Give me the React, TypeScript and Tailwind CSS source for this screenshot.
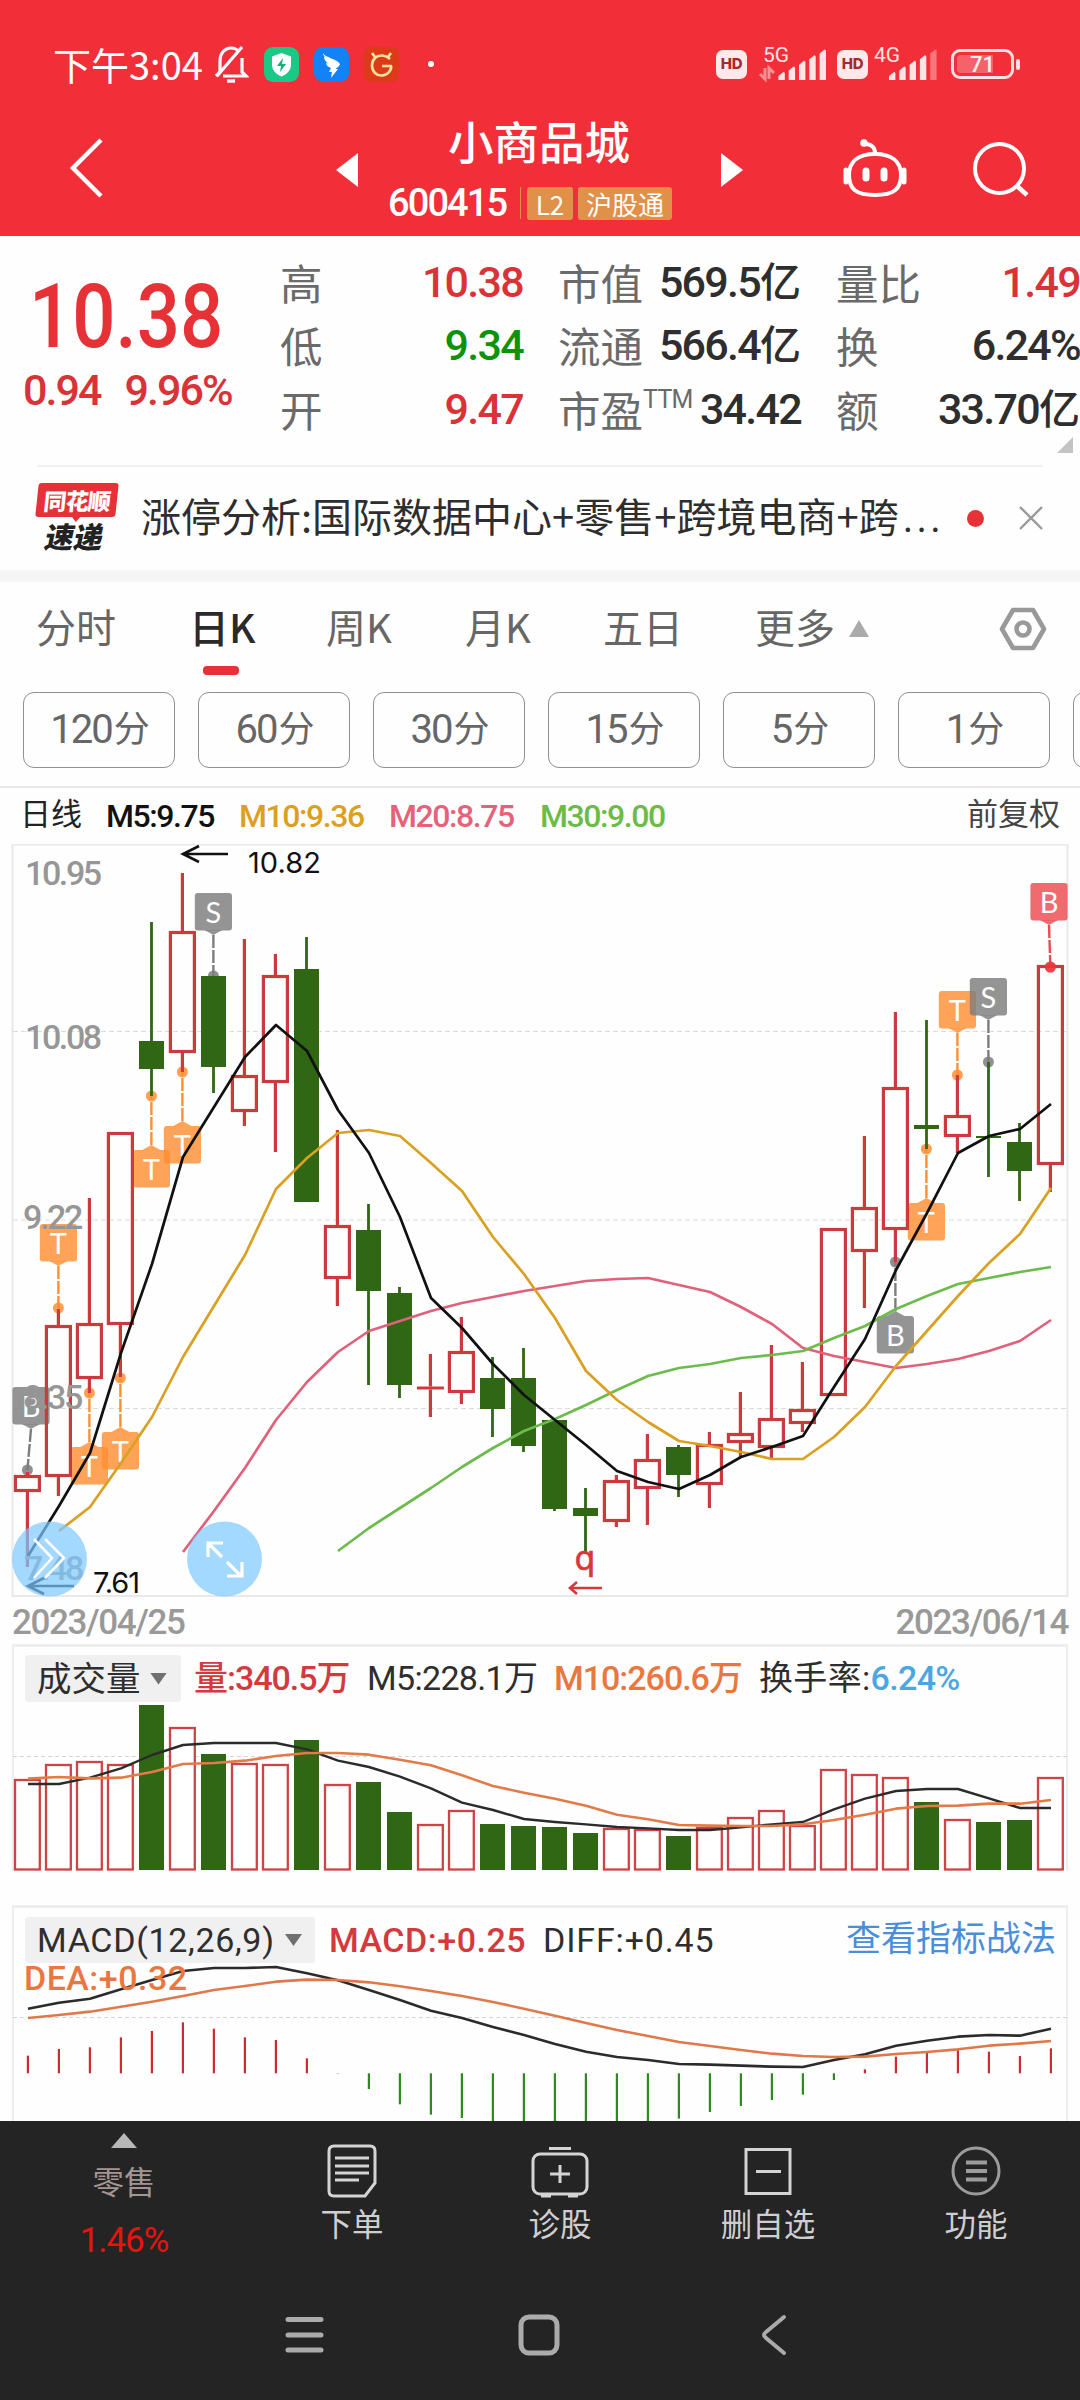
import type { ReactNode } from "react";

const RED = "#cb3a3c";
const GREEN = "#2f6714";
const ORANGE = "#ff8f33";
const GREY = "#7d7d7d";

const cx = (i: number) => 27.4 + i * 31;

// [up, high, bodyTop, bodyBottom, low]
const CANDLES: [number, number, number, number, number][] = [
    [1, 1472, 1475, 1492, 1567], [1, 1309, 1325, 1477, 1496], [1, 1198, 1323, 1379, 1393], [1, 1132, 1132, 1325, 1377],
    [0, 922, 1041, 1069, 1096], [1, 873, 931, 1053, 1072], [0, 976, 976, 1067, 1093], [1, 939, 1075, 1112, 1126],
    [1, 954, 975, 1083, 1152], [0, 937, 969, 1202, 1202], [1, 1130, 1225, 1279, 1306], [0, 1204, 1230, 1291, 1385],
    [0, 1287, 1293, 1385, 1398], [1, 1354, 1386.5, 1389.5, 1417], [1, 1317, 1351, 1393, 1404], [0, 1357, 1378, 1409, 1437],
    [0, 1348, 1378, 1446, 1452], [0, 1420, 1420, 1509, 1511], [0, 1488, 1508, 1516, 1554], [1, 1475, 1480, 1522, 1527],
    [1, 1434, 1459, 1489, 1525], [0, 1445, 1447, 1475, 1497], [1, 1432, 1444, 1485, 1508], [1, 1392, 1433, 1443, 1457],
    [1, 1345, 1418, 1448, 1458], [1, 1362, 1409, 1424, 1432], [1, 1228, 1228, 1396, 1396], [1, 1136, 1207, 1252, 1308],
    [1, 1012, 1087, 1230, 1262], [0, 1020, 1125, 1129, 1149], [1, 1075, 1115, 1137, 1153], [0, 1062, 1136, 1138, 1177],
    [0, 1123, 1142, 1171, 1201], [1, 965, 965, 1165, 1192],
];

const M5 = [1556, 1506, 1453, 1353, 1264, 1157, 1107, 1057, 1025, 1051, 1110, 1153, 1217, 1298, 1328, 1364, 1395, 1420, 1445, 1471, 1482, 1489, 1475, 1457, 1447, 1436, 1387, 1339, 1270, 1213, 1153, 1136, 1129, 1104];
const M10 = [1531, 1507, 1463, 1417, 1357, 1306, 1255, 1189, 1158, 1133, 1130, 1136, 1163, 1191, 1237, 1274, 1318, 1371, 1400, 1422, 1441, 1446, 1452, 1459, 1459, 1437, 1407, 1366, 1331, 1296, 1263, 1234, 1188];
const M20 = [1552, 1511, 1468, 1420, 1382, 1352, 1331, 1321, 1311, 1303, 1297, 1291, 1286, 1281, 1279, 1278, 1285, 1292, 1307, 1324, 1348, 1356, 1362, 1368, 1364, 1359, 1351, 1341, 1320];
const M30 = [1551, 1528, 1508, 1488, 1467, 1448, 1431, 1419, 1405, 1390, 1376, 1368, 1364, 1358, 1355, 1351, 1338, 1326, 1309, 1296, 1284, 1278, 1272, 1267];

const VOL = [1779, 1764, 1761, 1764, 1705, 1727, 1754, 1763, 1764, 1740, 1784, 1782, 1812, 1824, 1810, 1824, 1826, 1827, 1833, 1828, 1829, 1836, 1827, 1817, 1810, 1825, 1769, 1774, 1777, 1802, 1819, 1822, 1820, 1777];
const VOL_M5 = [462, 462, 443, 415, 375, 345, 339, 339, 339, 358, 392, 411, 440, 475, 518, 540, 567, 576, 583, 591, 595, 600, 600, 592, 583, 576, 538, 506, 483, 477, 477, 505, 534, 534].map((v) => 1630 + v / 3);
const VOL_M10 = [446, 441, 445, 443, 426, 402, 399, 392, 378, 369, 369, 374, 389, 406, 436, 468, 488, 506, 527, 554, 568, 585, 587, 588, 588, 583, 570, 554, 536, 528, 527, 521, 521, 510].map((v) => 1630 + v / 3);

const DIFF = [356, 338, 326, 298, 270, 243, 234, 234, 231, 250, 271, 300, 330, 362, 384, 411, 435, 462, 485, 501, 510, 522, 524, 527, 530, 531, 510, 493, 467, 452, 440, 435, 437, 416].map((v) => 1890 + v / 3);
const DEA = [384, 375, 365, 350, 335, 318, 300, 288, 275, 269, 270, 277, 289, 303, 318, 336, 356, 377, 399, 420, 438, 456, 468, 480, 491, 498, 501, 500, 492, 486, 478, 467, 461, 453].map((v) => 1890 + v / 3);
const HIST = [497, 477, 472, 442, 423, 397, 416, 442, 450, 505, 552, 597, 643, 674, 684, 710, 720, 720, 720, 710, 700, 686, 666, 648, 630, 614, 570, 538, 500, 488, 480, 485, 498, 475].map((v) => 1890 + v / 3);

// signal flags: box centre, box top, candle x, dot y, pointing down or up
const FLAGS: { t: string; x: number; top: number; dx: number; dot: number; down: boolean; c: string }[] = [
    { t: "B", x: 31, top: 1387, dx: 27.4, dot: 1470, down: true, c: GREY },
    { t: "T", x: 58.4, top: 1224, dx: 58.4, dot: 1308, down: true, c: ORANGE },
    { t: "T", x: 89.4, top: 1447, dx: 89.4, dot: 1393, down: false, c: ORANGE },
    { t: "T", x: 120.4, top: 1432, dx: 120.4, dot: 1378, down: false, c: ORANGE },
    { t: "T", x: 151.4, top: 1150, dx: 151.4, dot: 1096, down: false, c: ORANGE },
    { t: "T", x: 182.4, top: 1126, dx: 182.4, dot: 1072, down: false, c: ORANGE },
    { t: "S", x: 213.4, top: 893, dx: 213.4, dot: 976, down: true, c: GREY },
    { t: "B", x: 895.4, top: 1316, dx: 895.4, dot: 1262, down: false, c: GREY },
    { t: "T", x: 926.4, top: 1203, dx: 926.4, dot: 1149, down: false, c: ORANGE },
    { t: "T", x: 957.4, top: 991, dx: 957.4, dot: 1075, down: true, c: ORANGE },
    { t: "S", x: 988.4, top: 978, dx: 988.4, dot: 1062, down: true, c: GREY },
    { t: "B", x: 1049, top: 883, dx: 1050.4, dot: 967, down: true, c: "#ec4a50" },
];

function Line({ data, from = 0, color, w = 2.7 }: { data: number[]; from?: number; color: string; w?: number }) {
    return (
        <polyline
            points={data.map((y, i) => `${cx(i + from) + 0.6},${y}`).join(" ")}
            fill="none"
            stroke={color}
            strokeWidth={w}
            strokeLinejoin="round"
        />
    );
}

function Flag({ f }: { f: (typeof FLAGS)[number] }) {
    const edge = f.down ? f.top + 37 : f.top;
    const tip = f.down ? edge + 5 : edge - 5;
    return (
        <g>
            <line x1={f.x} y1={tip} x2={f.dx} y2={f.dot} stroke={f.c} strokeWidth="2.4" strokeDasharray="13 2" />
            <circle cx={f.dx} cy={f.dot} r="5.5" fill={f.c} fillOpacity="0.85" />
            <g fill={f.c} fillOpacity="0.82">
                <rect x={f.x - 18.6} y={f.top} width="37.2" height="37.4" rx="3" />
                <polygon points={`${f.x - 9},${edge} ${f.x + 9},${edge} ${f.x},${tip}`} />
            </g>
            <text x={f.x} y={f.top + 29.5} textAnchor="middle" fontSize="29" fill="#fff" className="font-[Lato]">{f.t}</text>
        </g>
    );
}

function StatusBar() {
    return (
        <div className="flex h-[112px] items-center pl-[53px] pr-[60px] pt-4">
            <span className="-mt-[2px] w-[160px] whitespace-nowrap text-[38px]">下午3:04</span>
            <svg width="36" height="40" viewBox="0 0 36 40" fill="none" stroke="#fff" strokeWidth="3.2">
                <path d="M7 28V17C7 9 12 4 18 4c3 0 6 1 8 4M29 14v14l4 4H10M3 32l4-4" />
                <path d="M29 3 4 32" />
                <path d="M14 37h8" strokeWidth="3.4" />
            </svg>
            <svg width="35" height="35" viewBox="0 0 35 35" className="ml-[15px]">
                <rect width="35" height="35" rx="9" fill="#1cc886" />
                <path d="M17.500 6 27 9.500v8c0 6-4 9.500-9.500 12C12 27 8 23.500 8 17.500v-8z" fill="#fff" />
                <path d="M19 11l-6 8h4l-1 6 6-8h-4z" fill="#1cae78" />
            </svg>
            <svg width="35" height="35" viewBox="0 0 35 35" className="ml-[15px]">
                <rect width="35" height="35" rx="9" fill="#1182f8" />
                <path d="M9 6c2 5 13 5 17 11-1 3-4 4-4 5h2l-7 9 1-6h-3l2-4c-3-1-5-3-5-5l2 .5c-3-2-4-5-4-7l3 1C10 10 9 8 9 6z" fill="#fff" />
            </svg>
            <svg width="35" height="35" viewBox="0 0 35 35" className="ml-[15px]">
                <rect width="35" height="35" rx="8" fill="#dc3a18" />
                <path d="M8 6l3 4M27 6l-3 4M26 12C22 8 15 7 11 11s-4 11 0 15 11 3 14-1 2-6 2-6h-9" fill="none" stroke="#fbe5a0" strokeWidth="2.6" />
            </svg>
            <span className="ml-[29px] h-[6px] w-[6px] rounded-full bg-white" />
            <div className="ml-auto flex h-9 items-center text-white/90">
                <Hd />
                <Signal label="5G" arrows />
                <Hd />
                <Signal label="4G" />
                <div className="ml-[13px] flex h-[30px] w-[63px] items-center rounded-[9px] border-[3px] border-white/85 p-[3px]">
                    <div className="flex h-full w-full items-center justify-center rounded-[4px] bg-linear-to-r from-white/25 from-70% to-transparent to-70% font-[Roboto] text-[22px] font-medium">71</div>
                </div>
                <span className="ml-[2px] h-[11px] w-[4px] rounded bg-white/85" />
            </div>
        </div>
    );
}

function Hd() {
    return (
        <span className="flex h-[29px] w-[31px] items-center justify-center rounded-[7px] bg-white/90 font-[Inter] text-[15px] font-extrabold tracking-[-0.02em] text-[#a52a30]">HD</span>
    );
}

function Signal({ label, arrows }: { label: string; arrows?: boolean }) {
    return (
        <svg width={arrows ? 78 : 70} height="36" viewBox={arrows ? "0 0 78 36" : "0 0 70 36"} className={arrows ? "ml-3 overflow-visible" : "overflow-visible"}>
            <g transform={arrows ? "translate(0 0)" : "translate(-9 0)"} fill="#ffe4e4">
                <text x={arrows ? 4 : 15} y="16" fontSize="21" className="font-[Roboto]">{label}</text>
                {arrows && <path d="M6 22v11l-5-5M10 33V22l5 5" stroke="#fa8f94" strokeWidth="3" fill="none" />}
                {[0, 1, 2, 3, 4].map((i) => (
                    <path
                        key={i}
                        transform={`translate(${(arrows ? 19.4 : 30) + i * 10.3} ${26 - i * 5.6})`}
                        d={`M0 4L5 0Q6.400 0 6.400 1.500V${8 + i * 5.6}H0z`}
                        opacity={!arrows && i === 4 ? 0.4 : 1}
                    />
                ))}
            </g>
        </svg>
    );
}

function Header() {
    return (
        <div className="flex h-[124px] text-white">
            <svg width="380" height="124" viewBox="0 112 380 124" fill="none" className="shrink-0">
                <path d="M101 140 73 168l28 28" stroke="#fff" strokeWidth="4.500" />
                <path d="M358 153v34l-22-17z" fill="#fff" />
            </svg>
            <div className="flex w-[320px] flex-col items-center">
                <div className="mr-[2px] h-[54px] pt-[1px] text-[45.500px] font-medium leading-[54px]">小商品城</div>
                <div className="mt-[18px] flex h-[38px] w-[304px] items-center">
                    <span className="w-[132px] font-[Roboto] text-[38px] font-medium tracking-[-0.05em]">600415</span>
                    <span className="mr-[6px] h-8 w-px bg-[#e09048]" />
                    <span className="mr-[5px] flex h-[33px] w-[46px] items-center justify-center rounded-[3px] bg-[#e09048] text-[26px]">L2</span>
                    <span className="flex h-[33px] w-[94px] items-center justify-center rounded-[3px] bg-[#e09048] text-[26px]">沪股通</span>
                </div>
            </div>
            <svg width="380" height="124" viewBox="700 112 380 124" fill="none" stroke="#fff" strokeWidth="4">
                <path d="M721 153v34l22-17z" fill="#fff" stroke="none" />
                <path d="M849 175c0-14 10-21 26-21s26 7 26 21-7 20-26 20-26-6-26-20z" />
                <path d="M846 170v12M904 170v12" strokeWidth="5" strokeLinecap="round" />
                <path d="M875 153c0-5-3-9-10-9" />
                <path d="M866 171v7M884 171v7" strokeWidth="7" strokeLinecap="round" />
                <circle cx="864" cy="143" r="3.800" fill="#fff" stroke="none" />
                <circle cx="999.500" cy="168.500" r="24.500" />
                <path d="M1017 186l10 9" strokeWidth="4.500" />
            </svg>
        </div>
    );
}

const NUM = "font-[Roboto,'Noto_Sans_CJK_SC'] font-medium tracking-[-0.04em] text-[43px]";

function Pair({ label, sup, value, color = "text-[#2e2e2e]" }: { label: string; sup?: string; value: ReactNode; color?: string }) {
    return (
        <div className="flex h-[63.500px] items-center justify-between whitespace-nowrap">
            <span className="flex text-[42.500px] text-[#6a6a6a]">
                {label}
                {sup && <span className="mt-1 font-[Roboto] text-[25px] tracking-[-0.03em]">{sup}</span>}
            </span>
            <span className={`${NUM} ${color}`}>{value}</span>
        </div>
    );
}

function Yi() {
    return <span className="text-[41px] tracking-normal">亿</span>;
}

function Quote() {
    return (
        <div className="relative flex h-[229px] pt-[15px]">
            <div className="w-[280px] text-[#e63236]">
                <div className="ml-[29px] mt-[18px] h-[96px] w-[222px] origin-left scale-x-[0.855] font-[Roboto] text-[89px] font-medium leading-[96px]">10.38</div>
                <div className="-mt-[7px] flex gap-[24px] pl-[23px] font-[Roboto] text-[43px] font-medium tracking-[-0.045em] text-[#d93338]">
                    <span>0.94</span>
                    <span>9.96%</span>
                </div>
            </div>
            <div className="-mt-[1px] w-[243px]">
                <Pair label="高" value="10.38" color="text-[#d93338]" />
                <Pair label="低" value="9.34" color="text-[#0c930c]" />
                <Pair label="开" value="9.47" color="text-[#d93338]" />
            </div>
            <div className="-mt-[1px] ml-[35px] w-[243px]">
                <Pair label="市值" value={<>569.5<Yi /></>} />
                <Pair label="流通" value={<>566.4<Yi /></>} />
                <Pair label="市盈" sup="TTM" value="34.42" />
            </div>
            <div className="-mt-[1px] ml-[35px] w-[244px]">
                <Pair label="量比" value="1.49" color="text-[#d93338]" />
                <Pair label="换" value="6.24%" />
                <Pair label="额" value={<>33.70<Yi /></>} />
            </div>
            <span className="absolute bottom-3 right-[7px] h-4 w-4 bg-[#c4c4c4] [clip-path:polygon(100%_0,100%_100%,0_100%)]" />
        </div>
    );
}

function Banner() {
    return (
        <div className="h-[105px] px-[37px]">
            <div className="flex h-full items-center border-t-2 border-[#f0f0f0] pb-px">
                <div className="-mt-[5px] flex w-[105px] flex-col">
                    <div className="relative flex h-[34px] w-[80px] -skew-x-6 items-center justify-center rounded-[3px] bg-[#e63236] text-[23px] font-black tracking-[-0.04em] text-white">
                        同花顺
                        <span className="absolute -bottom-[5px] left-[36px] h-[6px] w-[10px] bg-[#e63236] [clip-path:polygon(0_0,100%_0,50%_100%)]" />
                    </div>
                    <div className="mt-[4px] h-[28px] w-[76px] -skew-x-12 text-center text-[29px] font-black leading-[28px] text-[#222]">速递</div>
                </div>
                <span className="-mt-[2px] w-[834px] whitespace-nowrap text-[40px] text-[#2e2e2e]">涨停分析:国际数据中心+零售+跨境电商+跨<span className="ml-[4px] font-[Roboto] tracking-[0.08em]">...</span></span>
                <span className="h-[17px] w-[17px] shrink-0 rounded-full bg-[#e63236]" />
                <svg width="24" height="24" viewBox="0 0 24 24" stroke="#999" strokeWidth="2.400" className="ml-[35px] shrink-0">
                    <path d="M1 1l22 22M23 1 1 23" />
                </svg>
            </div>
        </div>
    );
}

function Tabs() {
    return (
        <div className="flex h-[122px] items-start border-t-[12px] border-[#f5f5f5] pl-[36px] text-[40px] leading-[60px] text-[#666]">
            <span className="mt-[14px] w-[153px]">分时</span>
            <span className="mt-[14px] flex w-[137px] flex-col font-medium text-[#2a2a2a]">
                日K
                <i className="ml-[14px] mt-[10px] h-[9px] w-[36px] rounded-[4px] bg-[#e93036]" />
            </span>
            <span className="mt-[14px] w-[139px]">周K</span>
            <span className="mt-[14px] w-[138px]">月K</span>
            <span className="mt-[14px] w-[152px]">五日</span>
            <span className="mt-[14px] w-[94px]">更多</span>
            <span className="mt-[38px] h-[17px] w-[20px] bg-[#aaa] [clip-path:polygon(50%_0,100%_100%,0_100%)]" />
            <svg width="48" height="44" viewBox="0 0 48 44" fill="none" stroke="#999" strokeWidth="4.600" strokeLinejoin="round" className="ml-[130px] mt-[25px]">
                <path d="M14 3h20l11 19-11 19H14L3 22z" />
                <circle cx="24" cy="22" r="6.500" />
            </svg>
        </div>
    );
}

function Periods() {
    return (
        <div className="flex h-[96px] gap-[23px] overflow-hidden border-b-2 border-[#e8e8e8] pl-[23px]">
            {["120", "60", "30", "15", "5", "1", ""].map((p) => (
                <span key={p} className="flex h-[76px] w-[152px] shrink-0 items-center justify-center rounded-[11px] border border-[#909090] text-[#666]">
                    {p && (
                        <span className="font-[Roboto,'Noto_Sans_CJK_SC'] text-[40px] tracking-[-0.05em]">
                            {p}<span className="relative -top-[1px] ml-[2px] text-[36px]">分</span>
                        </span>
                    )}
                </span>
            ))}
        </div>
    );
}

function Legend() {
    return (
        <div className="flex h-[56px] items-center whitespace-nowrap pb-[1px] pl-[20px] pr-[20px] font-[Roboto,'Noto_Sans_CJK_SC'] text-[32px] font-medium tracking-[-0.045em]">
            <span className="w-[86px] text-[31px] font-normal tracking-normal text-[#222]">日线</span>
            <span className="w-[133px] text-[#111]">M5:9.75</span>
            <span className="w-[150px] text-[#dd9f1f]">M10:9.36</span>
            <span className="w-[151px] text-[#e6627a]">M20:8.75</span>
            <span className="text-[#6bbb48]">M30:9.00</span>
            <span className="ml-auto text-[31px] font-normal tracking-normal text-[#444]">前复权</span>
        </div>
    );
}

function KChart() {
    return (
        <svg width="1080" height="754" viewBox="0 844 1080 754" className="block">
            <rect x="12.500" y="844.500" width="1055" height="751.500" fill="none" stroke="#e9e9e9" strokeWidth="2" />
            {[1031.5, 1220, 1408.5].map((y) => (
                <line key={y} x1="13" x2="1067" y1={y} y2={y} stroke="#dcdcdc" strokeWidth="1.200" strokeDasharray="5 3" />
            ))}
            {FLAGS.map((f, i) => <Flag key={i} f={f} />)}
            {CANDLES.map(([up, hi, top, bot, lo], i) => {
                const x = cx(i);
                if (!up) {
                    return (
                        <g key={i} fill={GREEN}>
                            <rect x={x - 1.3} y={hi} width="2.8" height={lo - hi} />
                            <rect x={x - 12.4} y={top} width="25" height={bot - top} />
                        </g>
                    );
                }
                return (
                    <g key={i} fill={RED}>
                        <rect x={x - 1.6} y={hi} width="3.2" height={top - hi} />
                        <rect x={x - 1.6} y={bot} width="3.2" height={lo - bot} />
                        {bot - top > 4
                            ? <rect x={x - 12} y={top + 1.5} width="24" height={bot - top - 3} fill="none" stroke={RED} strokeWidth="3.2" />
                            : <rect x={x - 13.5} y={top} width="27" height={bot - top} />}
                    </g>
                );
            })}
            <Line data={M20} from={5} color="#e0617a" />
            <Line data={M30} from={10} color="#6cbb4c" />
            <Line data={M10} from={1} color="#d9a022" />
            <Line data={M5} color="#111" />
            <circle cx="1050.400" cy="967" r="5.500" fill="#f0353b" fillOpacity="0.7" />

            <g fill="#969696" fontSize="34" fontWeight="500" letterSpacing="-2.400" className="font-[Roboto]">
                <text x="25" y="885">10.95</text>
                <text x="25" y="1049">10.08</text>
                <text x="23" y="1229">9.22</text>
                <text x="23" y="1409">8.35</text>
                <text x="24" y="1580">7.48</text>
            </g>
            <g fill="none" stroke="#111" strokeWidth="2.600">
                <path d="M228 854h-45M199 846l-16 8 16 8" />
                <path d="M74 1586H28M44 1578l-16 8 16 8" />
            </g>
            <g fill="#111" fontSize="29" className="font-[Inter]">
                <text x="248" y="873" textLength="73">10.82</text>
                <text x="93" y="1593" textLength="47">7.61</text>
            </g>
            <text x="574.500" y="1570" fontSize="33" fill="#d8383c" stroke="#d8383c" strokeWidth="0.600" className="font-['DejaVu_Sans']">q</text>
            <path d="M602 1588h-32M577 1582l-7 6 7 6" fill="none" stroke="#d8383c" strokeWidth="2.600" />

            <g fill="#7cc8ff" fillOpacity="0.7">
                <circle cx="49.500" cy="1559" r="37.500" />
                <circle cx="224.500" cy="1559" r="37.500" />
            </g>
            <g fill="none" stroke="#fff" strokeWidth="2.600">
                <path d="M34 1539l18 19-18 20M45 1539l19 19-19 20" />
                <path d="M208 1557v-14h15M208 1543l14 14M227 1562l14 14M242 1562v14h-15" strokeWidth="3.200" />
            </g>
        </svg>
    );
}

function Caret() {
    return <i className="h-[12px] w-[17px] bg-[#707070] [clip-path:polygon(0_0,100%_0,50%_100%)]" />;
}

const HEAD = "mx-[12px] flex items-start whitespace-nowrap border-x-2 border-t-[3px] border-[#eeeeee] pl-[11px] font-[Roboto,'Noto_Sans_CJK_SC'] text-[34px] leading-[46px] text-[#2e2e2e]";

function Volume() {
    return (
        <div>
            <div className={`${HEAD} h-[60px] pt-[8px]`}>
                <span className="flex h-[47px] w-[156px] items-center justify-between rounded-[4px] bg-[#f0f0f0] pl-[12px] pr-[14px] text-[34.500px]">成交量<Caret /></span>
                <span className="ml-[13px] w-[173px] font-medium tracking-[-0.03em] text-[#d23a3e]">量:340.5万</span>
                <span className="w-[187px] tracking-[-0.02em]">M5:228.1万</span>
                <span className="w-[205px] font-medium tracking-[-0.03em] text-[#ea7640]">M10:260.6万</span>
                <span className="tracking-[0.01em]">换手率:</span>
                <span className="font-medium tracking-[-0.02em] text-[#4aa7e2]">6.24%</span>
            </div>
            <svg width="1080" height="168" viewBox="0 1704 1080 168" className="block">
                <path d="M13 1704v167M1067 1704v167" stroke="#eee" strokeWidth="2" />
                <line x1="13" x2="1067" y1="1756.500" y2="1756.500" stroke="#d4d4d4" strokeWidth="1.200" strokeDasharray="4 3" />
                {VOL.map((y, i) => CANDLES[i][0]
                    ? <rect key={i} x={cx(i) - 12.4} y={y + 1} width="24.800" height={1869.5 - y - 1} fill="#fff" stroke="#cf4347" strokeWidth="2.300" />
                    : <rect key={i} x={cx(i) - 12.4} y={y} width="25" height={1870 - y} fill={GREEN} />)}
                <Line data={VOL_M5} color="#2b2b2b" w={2.4} />
                <Line data={VOL_M10} color="#e37a48" w={2.6} />
            </svg>
        </div>
    );
}

function Macd() {
    return (
        <div className="mt-[33px]">
            <div className={`${HEAD} h-[60px] pt-[9px]`}>
                <span className="flex h-[46px] w-[290px] items-center justify-between rounded-[4px] bg-[#f0f0f0] pl-[12px] pr-[13px] tracking-[0.02em]">MACD(12,26,9)<Caret /></span>
                <span className="ml-[14px] w-[214px] font-medium tracking-[0.015em] text-[#d23a3e]">MACD:+0.25</span>
                <span className="tracking-[0.025em]">DIFF:+0.45</span>
                <span className="ml-auto mr-[10px] text-[35px] text-[#4a8edb]">查看指标战法</span>
            </div>
            <svg width="1080" height="156" viewBox="0 1965 1080 156" className="block overflow-visible">
                <path d="M13 1965v156M1067 1965v156" stroke="#eee" strokeWidth="2" />
                <line x1="13" x2="1067" y1="2017.500" y2="2017.500" stroke="#d4d4d4" strokeWidth="1.200" strokeDasharray="4 3" />
                {HIST.map((y, i) => (
                    <line key={i} x1={cx(i) + 0.5} x2={cx(i) + 0.5} y1="2073.300" y2={Math.min(y, 2121)} stroke={i === 10 ? "#aaa" : y < 2073 ? "#cf2a30" : "#2a8c1c"} strokeWidth="2.200" />
                ))}
                <Line data={DIFF} color="#2b2b2b" w={2.6} />
                <Line data={DEA} color="#e0784a" w={2.6} />
                <text x="24" y="1990" fontSize="34" fontWeight="500" fill="#ea7640" textLength="163" className="font-[Roboto]">DEA:+0.32</text>
            </svg>
        </div>
    );
}

function Action({ label, children }: { label: string; children: ReactNode }) {
    return (
        <div className="flex w-[208px] flex-col items-center text-[31.500px] leading-[44px] text-[#cfcfcf]">
            <svg width="60" height="60" viewBox="0 0 60 60" fill="none" stroke="#d4d4d4" strokeWidth="3" className="-mb-[1px] mt-[20px]">{children}</svg>
            {label}
        </div>
    );
}

function BottomBar() {
    return (
        <div className="h-[279px] bg-[#242424]">
            <div className="flex h-[170px]">
                <div className="flex w-[248px] flex-col items-center">
                    <i className="mt-[12px] h-[15px] w-[26px] bg-[#b8b8b8] [clip-path:polygon(50%_0,100%_100%,0_100%)]" />
                    <span className="mt-[10px] text-[31.500px] leading-[44px] text-[#a39593]">零售</span>
                    <span className="mt-[17px] font-[Roboto] text-[35px] leading-[44px] tracking-[-0.03em] text-[#e8120f]">1.46%</span>
                </div>
                <Action label="下单">
                    <path d="M12 5h36q5 0 5 5v32L43 55H12q-5 0-5-5V10q0-5 5-5z" />
                    <path d="M13 17h34M13 25h34M13 32h34M13 39h24" />
                </Action>
                <Action label="诊股">
                    <rect x="3" y="13" width="54" height="40" rx="7" />
                    <path d="M19 7.500h22M11 55h10M38 55h10M20 33h20M30 24v18" />
                </Action>
                <Action label="删自选">
                    <rect x="8" y="8.500" width="44" height="44" />
                    <path d="M18 30.500h25" />
                </Action>
                <Action label="功能">
                    <circle cx="30" cy="30" r="23" stroke="#9c9c9c" />
                    <path d="M20 21.500h21M20 30h21M20 38.500h21" stroke="#9c9c9c" strokeWidth="4" />
                </Action>
            </div>
            <div className="flex h-[88px] items-center">
                <svg width="1080" height="60" viewBox="0 2305 1080 60" fill="none" stroke="#ababab" strokeWidth="5" strokeLinecap="round" strokeLinejoin="round">
                    <path d="M288 2319.500h33M288 2335h33M288 2350h33" />
                    <rect x="521" y="2317" width="36" height="36" rx="8" />
                    <path d="M784 2317l-18 15q-4 3 0 6l18 15" strokeWidth="4" />
                </svg>
            </div>
        </div>
    );
}

export default function App() {
    return (
        <div className="flex h-[2400px] w-[1080px] flex-col overflow-hidden bg-[#fefefe] font-['Noto_Sans_CJK_SC',sans-serif]">
            <div className="h-[236px] bg-[#f22f38] text-white">
                <StatusBar />
                <Header />
            </div>
            <Quote />
            <Banner />
            <Tabs />
            <Periods />
            <Legend />
            <KChart />
            <div className="flex h-[46px] justify-between px-[12px] font-[Roboto] text-[35px] font-medium leading-[50px] tracking-[-0.04em] text-[#999]">
                <span>2023/04/25</span>
                <span>2023/06/14</span>
            </div>
            <Volume />
            <Macd />
            <BottomBar />
        </div>
    );
}
